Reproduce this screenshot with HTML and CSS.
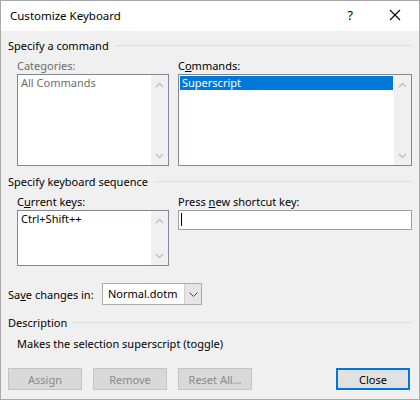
FILE: index.html
```html
<!DOCTYPE html>
<html lang="en">
<head>
<meta charset="utf-8">
<title>Customize Keyboard</title>
<link rel="stylesheet" href="styles.css">
</head>
<body>
<div class="dialog">
  <div class="titlebar">
    <span class="title">Customize Keyboard</span>
    <span class="help">?</span>
    <svg class="close" width="12" height="12" viewBox="0 0 12 12">
      <path d="M1 1 L11 11 M11 1 L1 11" stroke="#000" stroke-width="1.1" fill="none"/>
    </svg>
  </div>

  <div class="content">
    <div class="group-head"><span>Specify a command</span><i></i></div>
    <div class="cols">
      <div>
        <div class="label disabled">Categories:</div>
        <div class="listbox tall">
          <div class="items"><div class="item muted">All Commands</div></div>
          <div class="scroll">
            <svg width="9" height="6" viewBox="0 0 9 6"><path d="M1 5 L4.5 1.5 L8 5" stroke="#c2c2c2" stroke-width="1.5" fill="none"/></svg>
            <svg width="9" height="6" viewBox="0 0 9 6"><path d="M1 1 L4.5 4.5 L8 1" stroke="#c2c2c2" stroke-width="1.5" fill="none"/></svg>
          </div>
        </div>
      </div>
      <div>
        <div class="label">C<u>o</u>mmands:</div>
        <div class="listbox tall">
          <div class="items"><div class="item selected">Superscript</div></div>
          <div class="scroll">
            <svg width="9" height="6" viewBox="0 0 9 6"><path d="M1 5 L4.5 1.5 L8 5" stroke="#c2c2c2" stroke-width="1.5" fill="none"/></svg>
            <svg width="9" height="6" viewBox="0 0 9 6"><path d="M1 1 L4.5 4.5 L8 1" stroke="#c2c2c2" stroke-width="1.5" fill="none"/></svg>
          </div>
        </div>
      </div>
    </div>

    <div class="group-head second"><span>Specify keyboard sequence</span><i></i></div>
    <div class="cols">
      <div>
        <div class="label">C<u>u</u>rrent keys:</div>
        <div class="listbox short">
          <div class="items"><div class="item">Ctrl+Shift++</div></div>
          <div class="scroll">
            <svg width="9" height="6" viewBox="0 0 9 6"><path d="M1 5 L4.5 1.5 L8 5" stroke="#c2c2c2" stroke-width="1.5" fill="none"/></svg>
            <svg width="9" height="6" viewBox="0 0 9 6"><path d="M1 1 L4.5 4.5 L8 1" stroke="#c2c2c2" stroke-width="1.5" fill="none"/></svg>
          </div>
        </div>
      </div>
      <div>
        <div class="label">Press <u>n</u>ew shortcut key:</div>
        <div class="textbox"><span class="caret"></span></div>
      </div>
    </div>

    <div class="save-row">
      <span>Sa<u>v</u>e changes in:</span>
      <div class="combo">
        <span class="combo-value">Normal.dotm</span>
        <span class="combo-btn">
          <svg width="9" height="5" viewBox="0 0 9 5"><path d="M0.5 0.5 L4.5 4.5 L8.5 0.5" stroke="#444" stroke-width="1" fill="none"/></svg>
        </span>
      </div>
    </div>

    <div class="group-head third"><span>Description</span><i></i></div>
    <div class="description">Makes the selection superscript (toggle)</div>

    <div class="buttons">
      <button class="btn" disabled>Assign</button>
      <button class="btn" disabled>Remove</button>
      <button class="btn" disabled>Reset All...</button>
      <span class="spacer"></span>
      <button class="btn default">Close</button>
    </div>
  </div>
</div>
</body>
</html>
```

FILE: styles.css
```css
body {
  margin: 0;
  background: #ffffff;
}

.dialog {
  width: 420px;
  height: 400px;
  box-sizing: border-box;
  border: 1px solid #aaaaaa;
  background: #f0f0f0;
  font-family: "Noto Sans", "Open Sans", sans-serif;
  font-size: 11px;
  color: #000;
  overflow: hidden;
}

.titlebar {
  height: 30px;
  background: #ffffff;
  display: flex;
  align-items: center;
  padding-left: 9px;
}

.titlebar .title {
  flex: 1;
  font-size: 11.5px;
  margin-top: -1px;
}

.titlebar .help {
  font-size: 12.5px;
  margin-right: 36px;
  margin-top: -2px;
}

.titlebar .close {
  margin-right: 18px;
  margin-top: -2px;
}

.content {
  padding: 0 7px;
}

.group-head {
  display: flex;
  align-items: center;
  height: 16px;
  margin-top: 6px;
}

.group-head i {
  flex: 1;
  height: 0;
  border-top: 1px solid #dcdcdc;
  margin-left: 6px;
  margin-top: 1px;
}

.group-head.second {
  margin-top: 7px;
}

.group-head.third {
  margin-top: 9px;
}

.cols {
  display: grid;
  grid-template-columns: 152px 234px;
  column-gap: 9px;
  margin-left: 9px;
  margin-top: 5px;
}

.label {
  height: 16px;
  line-height: 16px;
}

.label.disabled {
  color: #6d6d6d;
}

.listbox {
  box-sizing: border-box;
  border: 1px solid #828790;
  background: #ffffff;
  display: flex;
}

.listbox.tall {
  height: 92px;
}

.listbox.short {
  height: 56px;
}

.items {
  flex: 1;
  padding: 1px;
}

.item {
  height: 14px;
  line-height: 14px;
  padding-left: 2px;
}

.item.muted {
  color: #6d6d6d;
}

.item.selected {
  background: #0078d7;
  color: #ffffff;
}

.scroll {
  width: 17px;
  background: #f0f0f0;
  display: flex;
  flex-direction: column;
  justify-content: space-between;
  align-items: center;
  padding: 7px 0 6px;
}

.textbox {
  box-sizing: border-box;
  height: 20px;
  border: 1px solid #a0a0a0;
  background: #ffffff;
  padding: 2px 0 0 2px;
}

.caret {
  display: block;
  width: 1px;
  height: 13px;
  background: #000;
}

.save-row {
  display: flex;
  align-items: center;
  margin-top: 17px;
}

.save-row > span {
  width: 94px;
}

.combo {
  box-sizing: border-box;
  width: 100px;
  height: 22px;
  border: 1px solid #adadad;
  background: #ffffff;
  display: flex;
}

.combo-value {
  flex: 1;
  line-height: 20px;
  padding-left: 5px;
}

.combo-btn {
  width: 16px;
  background: #e5e5e5;
  border-left: 1px solid #d0d0d0;
  display: flex;
  align-items: center;
  justify-content: center;
}

.description {
  margin: 6px 0 0 9px;
  height: 16px;
  line-height: 16px;
}

.buttons {
  display: flex;
  gap: 11px;
  margin-top: 16px;
  padding-right: 2px;
}

.spacer {
  flex: 1;
}

.btn {
  box-sizing: border-box;
  width: 74px;
  height: 22px;
  font: inherit;
  padding: 0;
  border: 1px solid #bfbfbf;
  background: #cccccc;
  color: #838383;
}

.btn:disabled {
  background: #d9d9d9;
  border-color: #c4c4c4;
  color: #8a8a8a;
}

.btn.default {
  border: 2px solid #0078d7;
  background: #e1e1e1;
  color: #000;
}
```
